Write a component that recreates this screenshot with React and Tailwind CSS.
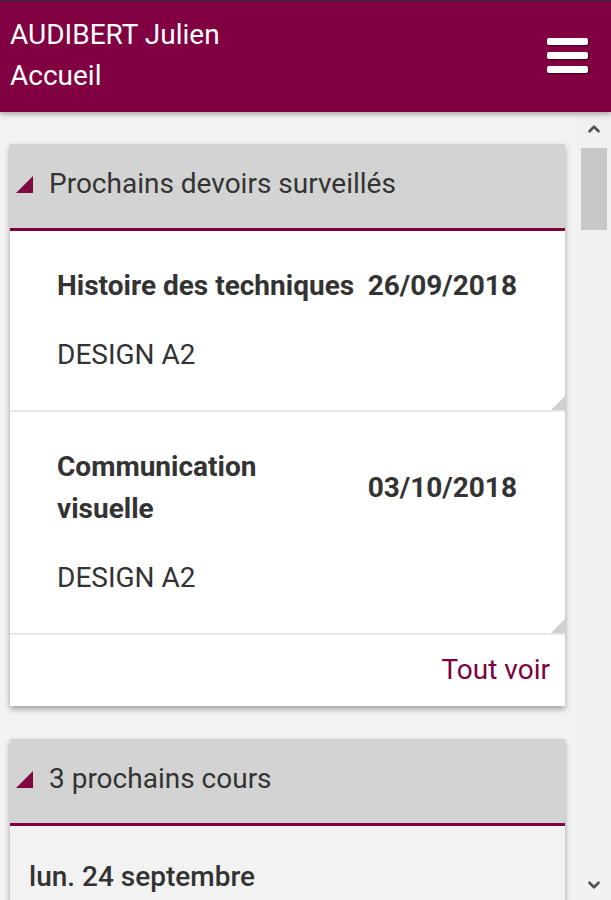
import { ChevronUp, ChevronDown } from 'lucide-react'

const devoirs = [
  { matiere: ['Histoire des techniques'], date: '26/09/2018', classe: 'DESIGN A2' },
  { matiere: ['Communication', 'visuelle'], date: '03/10/2018', classe: 'DESIGN A2' },
]

function Triangle() {
  return (
    <svg width="19" height="19" viewBox="0 0 19 19" className="shrink-0">
      <polygon points="18,1 18,18 1,18" fill="#7f0a3f" />
    </svg>
  )
}

function CardHeader({ title }) {
  return (
    <div className="flex h-[87px] items-center gap-[15px] border-b-[3px] border-[#7d0040] bg-[#d3d3d3] pl-[5px] pb-[4px]">
      <Triangle />
      <span className="text-[28px] leading-[32px] text-[#333]">{title}</span>
    </div>
  )
}

export default function App() {
  return (
    <div className="flex h-[900px] w-[611px] flex-col overflow-hidden bg-[#f3f3f3] font-['Roboto',sans-serif]">
      {/* Header */}
      <header className="relative z-10 flex h-[112px] shrink-0 items-center justify-between border-t-2 border-[#4f1c3a] bg-[#800041] pl-[10px] pr-[23px] shadow-[0_2px_6px_rgba(0,0,0,0.35)]">
        <div className="flex flex-col gap-[9px] pb-[4px] text-[28px] leading-[32px] text-white">
          <span>AUDIBERT Julien</span>
          <span>Accueil</span>
        </div>
        <div className="flex flex-col gap-[7px] pb-[4px]">
          <span className="block h-[7px] w-[41px] rounded-[2px] bg-white shadow-[1px_1px_1px_rgba(0,0,0,0.5)]" />
          <span className="block h-[7px] w-[41px] rounded-[2px] bg-white shadow-[1px_1px_1px_rgba(0,0,0,0.5)]" />
          <span className="block h-[7px] w-[41px] rounded-[2px] bg-white shadow-[1px_1px_1px_rgba(0,0,0,0.5)]" />
        </div>
      </header>

      <div className="flex min-h-0 flex-1">
        {/* Main content */}
        <main className="flex min-w-0 flex-1 flex-col gap-[33px] pl-[10px] pr-[12px] pt-[32px]">
          <section className="bg-white shadow-[0_3px_6px_rgba(0,0,0,0.35)]">
            <CardHeader title="Prochains devoirs surveillés" />
            {devoirs.map((d, idx) => (
              <div key={idx} className="relative border-b-2 border-[#e8e8e8] pb-[39px] pl-[47px] pr-[48px] pt-[34px]">
                <div className="flex items-center justify-between">
                  <div className="flex flex-col text-[28px] font-bold leading-[42px] text-[#333]">
                    {d.matiere.map((m) => (
                      <span key={m}>{m}</span>
                    ))}
                  </div>
                  <span className="text-[28px] font-bold text-[#333]">{d.date}</span>
                </div>
                <div className="mt-[32px] text-[28px] leading-[32px] text-[#333]">{d.classe}</div>
                <svg width="14" height="14" viewBox="0 0 14 14" className="absolute bottom-0 right-0">
                  <polygon points="14,0 14,14 0,14" fill="#d0d0d0" />
                </svg>
              </div>
            ))}
            <div className="flex h-[71px] items-center justify-end pr-[15px] pb-[2px]">
              <span className="text-[28px] leading-[32px] text-[#7d0040]">Tout voir</span>
            </div>
          </section>

          <section className="bg-[#f2f2f2] shadow-[0_3px_6px_rgba(0,0,0,0.35)]">
            <CardHeader title="3 prochains cours" />
            <div className="px-[19px] pt-[35px] pb-[20px] text-[28px] font-medium leading-[32px] text-[#333]">lun. 24 septembre</div>
          </section>
        </main>

        {/* Scrollbar */}
        <aside className="flex w-[34px] shrink-0 flex-col items-center bg-[#f1f1f1] pb-[6px]">
          <ChevronUp size={18} strokeWidth={3.5} className="mt-[8px] text-[#505050]" />
          <div className="mt-[10px] h-[82px] w-[26px] bg-[#c8c8c8]" />
          <div className="flex-1" />
          <ChevronDown size={18} strokeWidth={3.5} className="text-[#505050]" />
        </aside>
      </div>
    </div>
  )
}
